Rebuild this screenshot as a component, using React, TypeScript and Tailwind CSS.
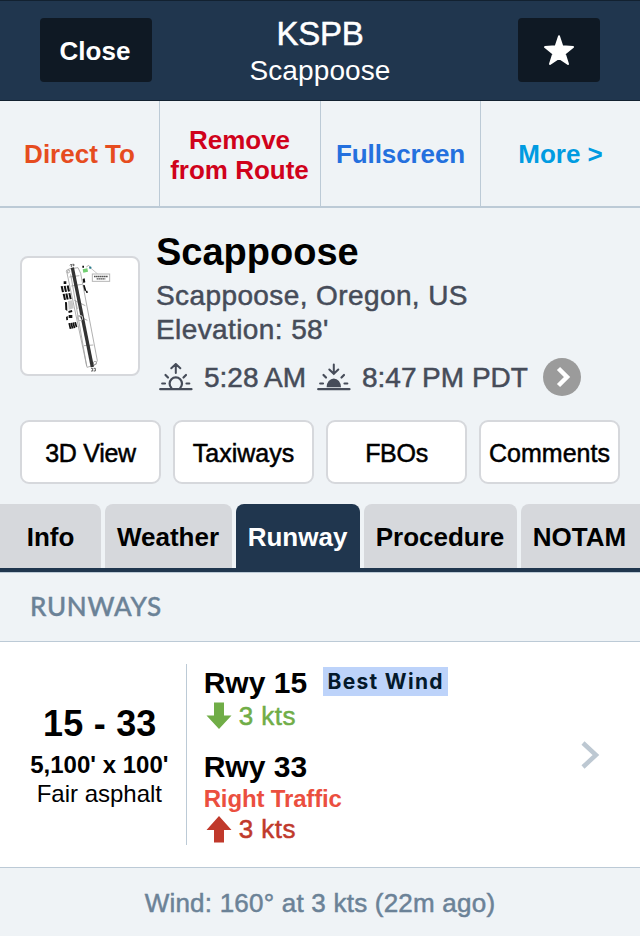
import type { ReactNode } from 'react';

const medium = '[-webkit-text-stroke:0.5px_currentColor]';

function AirportDiagram() {
  const hangars = [
    [152, 124], [161, 123], [170, 122],
    [158, 147], [166, 146], [175, 145],
  ];
  return (
    <svg viewBox="36 39 348 348" className="h-[116px] w-[116px]" fill="none">
      <g stroke="#a0a0a0" strokeWidth="2.5">
        <path d="M171 84 L176 72 L204 68 L212 85 L262 347 L255 360 L231 367 Z" />
        <path d="M182 88 L230 363 M178 96 L208 92 M184 123 L216 118 M193 166 L226 182 M203 212 L232 226 M222 302 L250 300 M202 192 L196 165" />
        <circle cx="174" cy="79" r="5" />
        <circle cx="255" cy="354" r="5" />
      </g>
      <path d="M187 68 L247 366" stroke="#333" strokeWidth="10" />
      <path d="M180 61 l4 -4 v9 m3 -8 h5 v4 h-4 M243 370 h5 v8 h-5 m8 -8 h5 v8 h-5" stroke="#444" strokeWidth="2.5" />
      <g fill="#111">
        {hangars.map(([x, y]) => (
          <path key={`${x}-${y}`} d={`M${x} ${y} l6 -1 l4 18 l-6 1 Z`} />
        ))}
        <path d="M161 109h8v8h-8zM165 171l6 1 1 26-6-4zM175 198l11-3 1 6-11 3zM176 210h11v9h-11zM168 216l5-3 1 12-5 1zM218 102l6-2 2 12-6 2zM219 121l5-1 5 17-5 1zM227 138l5-1 2 6-5 1zM217 62h5v6h-5z" />
        <path d="M175 235l5-1 4 17-5 1zM181 234l5-1 4 17-5 1zM187 233l5-1 4 17-5 1zM193 232l5-1 4 15-5 1z" />
      </g>
      <path d="M174 168 L187 166 L191 190 L176 194 Z" fill="#c9c9c9" />
      <circle cx="210" cy="219" r="8" stroke="#bbb" strokeWidth="3" />
      <path d="M218 73 L232 70 L234 80 L220 83 Z" fill="#72cf72" />
      <path d="M229 66 L236 61 L241 67" stroke="#aaa" strokeWidth="3" />
      <circle cx="241" cy="68" r="3.5" fill="#2a7c8c" />
      <path d="M243 70 L263 87" stroke="#aaa" strokeWidth="2" />
      <rect x="247" y="87" width="52" height="22" fill="#fff" stroke="#b5b5b5" strokeWidth="3" />
      <path d="M252 94.500 H294 M260 101.500 H286" stroke="#555" strokeWidth="4" strokeDasharray="5 1" />
    </svg>
  );
}

function SunIcon({ set = false }: { set?: boolean }) {
  return (
    <svg viewBox="0 0 34 28" className="h-7 w-[34px]" fill="none" stroke="#464c59" strokeWidth="2.200" strokeLinecap="round">
      <path d="M1.200 26.200 H32.500 M3.200 20.500 H6 M27.500 20.500 H30.300 M6.500 12 L9 14.500 M27 12 L24.500 14.500" />
      {set ? (
        <>
          <path d="M9.600 24.300 A7.200 8.800 0 0 1 24 24.300 Z" fill="#464c59" stroke="none" />
          <path d="M16.800 1.500 V10 M12.300 6.500 L16.800 10.800 L21.300 6.500" strokeWidth="2" />
        </>
      ) : (
        <>
          <path d="M12.400 25 A6.200 6.200 0 1 1 21.200 25" />
          <path d="M16.800 10 V1.500 M12.300 5.200 L16.800 1 L21.300 5.200" strokeWidth="2" />
        </>
      )}
    </svg>
  );
}

function WindArrow({ up = false }: { up?: boolean }) {
  return (
    <svg viewBox="0 0 26 27" className="h-[27px] w-[26px]">
      {up ? (
        <path d="M13 0 L25.500 14 H18 V26.500 H8 V14 H0.500 Z" fill="#c0392b" />
      ) : (
        <path d="M13 27 L25.500 13.500 H18 V0.500 H8 V13.500 H0.500 Z" fill="#70ad47" />
      )}
    </svg>
  );
}

function LinkButton({ children }: { children: ReactNode }) {
  return (
    <button className={`h-16 w-[141px] rounded-[9px] border-2 border-[#d6d8dc] bg-white pt-px text-[25px] leading-[30px] whitespace-nowrap text-black ${medium}`}>
      {children}
    </button>
  );
}

const tabs = [
  { name: 'Info', style: 'w-[101px] rounded-tr-lg bg-[#d6d8dc]' },
  { name: 'Weather', style: 'w-[127px] rounded-t-lg bg-[#d6d8dc] pr-px' },
  { name: 'Runway', style: 'w-[124px] rounded-t-lg bg-[#20364e] pr-px text-white' },
  { name: 'Procedure', style: 'w-[153px] rounded-t-lg bg-[#d6d8dc] pr-px' },
  { name: 'NOTAM', style: 'w-[119px] rounded-tl-lg bg-[#d6d8dc] pr-0.5' },
];

export default function App() {
  return (
    <div className="flex h-[936px] w-[640px] flex-col overflow-hidden bg-[#eff3f6] font-['Liberation_Sans',Arial,sans-serif] text-black antialiased">
      <header className="flex h-[101px] shrink-0 items-start justify-between border-y border-[#122130] bg-[#20364e] px-10 pt-[17px] text-white">
        <button className="h-16 w-28 rounded bg-[#0f1924] pt-0.5 pr-0.5 text-[26px] leading-8 font-bold">Close</button>
        <div className="-mt-1 -ml-[30px] w-[200px] text-center">
          <div className={`text-[33px] leading-10 tracking-[-0.200px] ${medium}`}>KSPB</div>
          <div className="pt-px text-[28px] leading-8 tracking-[0.100px]">Scappoose</div>
        </div>
        <button className="flex h-16 w-[82px] items-center justify-center rounded bg-[#0f1924]">
          <svg viewBox="0 0 30 30" className="h-[30px] w-[30px] overflow-visible" fill="#fff" stroke="#fff" strokeWidth="2" strokeLinejoin="round">
            <path d="M15 1.200 L18.300 11.300 L29 12 L20.700 18.600 L24 29 L15 22.900 L6 29 L9.300 18.600 L1 12 L11.700 11.300 Z" />
          </svg>
        </button>
      </header>

      <nav className="flex h-[107px] shrink-0 border-b-2 border-[#bccad6] text-center text-[26px] leading-[30px] font-bold">
        <div className="flex w-40 items-center justify-center border-r border-[#bccad6] text-[#e64c1f]">Direct To</div>
        <div className="flex w-[161px] items-center justify-center border-r border-[#bccad6] pt-0.5 pr-px text-[#d0021b]">Remove<br />from Route</div>
        <div className="flex w-40 items-center justify-center border-r border-[#bccad6] tracking-[-0.100px] text-[#2470de]">Fullscreen</div>
        <div className="flex w-[159px] items-center justify-center text-[#009be1]">More &gt;</div>
      </nav>

      <section className="flex h-[212px] shrink-0 gap-4 px-5">
        <div className="mt-12 h-[120px] w-[120px] shrink-0 rounded-lg border-2 border-[#d6d8dc] bg-white">
          <AirportDiagram />
        </div>
        <div className="pt-[22px] whitespace-nowrap text-[#464c59]">
          <h1 className="text-[38px] leading-[44px] font-bold text-black">Scappoose</h1>
          <div className={`pt-[5px] text-[28px] leading-[34px] ${medium}`}>
            <div className="tracking-[0.400px]">Scappoose, Oregon, US</div>
            <div className="tracking-[0.400px]">Elevation: 58'</div>
          </div>
          <div className={`mt-[10px] ml-[3px] flex h-[39px] items-center text-[28px] leading-[34px] ${medium}`}>
            <SunIcon />
            <span className="ml-[11px] w-[113px] pt-0.5">5:28&#8201;AM</span>
            <SunIcon set />
            <span className="ml-[11px] w-[181px] pt-0.5">8:47&#8201;PM PDT</span>
            <svg viewBox="0 0 38 38" className="h-[38px] w-[38px]">
              <circle cx="19" cy="19" r="19" fill="#9b9b9b" />
              <path d="M15.500 10.500 L24 19 L15.500 27.500" fill="none" stroke="#fff" strokeWidth="4.500" />
            </svg>
          </div>
        </div>
      </section>

      <div className="flex h-[84px] shrink-0 gap-3 px-5">
        <LinkButton><span className="tracking-[-0.300px]">3D View</span></LinkButton>
        <LinkButton>Taxiways</LinkButton>
        <LinkButton><span className="tracking-[-0.300px]">FBOs</span></LinkButton>
        <LinkButton>Comments</LinkButton>
      </div>

      <div className="flex h-[68px] shrink-0 gap-1 border-b-4 border-[#20364e] text-[26px] leading-[30px] font-bold">
        {tabs.map((tab) => (
          <div key={tab.name} className={`flex h-16 shrink-0 items-center justify-center pt-0.5 ${tab.style}`}>{tab.name}</div>
        ))}
      </div>

      <h2 className="h-[70px] shrink-0 border-y border-[#bccad6] pt-[17px] pl-[30px] font-['Lato','Open_Sans',sans-serif] text-[26px] leading-8 font-medium tracking-[0.700px] text-[#6b8297] [-webkit-text-stroke:0.4px_currentColor]">RUNWAYS</h2>

      <section className="flex h-[226px] shrink-0 items-center border-b border-[#bccad6] bg-white pr-10">
        <div className="flex h-[181px] w-[187px] flex-col items-center border-r border-[#bccad6] pt-10 pl-[13px] whitespace-nowrap">
          <div className="pl-px text-[36px] leading-10 font-bold tracking-[0.200px]">15 - 33</div>
          <div className="mt-1.5 text-[24px] leading-[30px] font-bold">5,100' x 100'</div>
          <div className="text-[24px] leading-7">Fair asphalt</div>
        </div>
        <div className="h-[181px] w-[380px] pl-[17px]">
          <div className="flex h-9 items-start">
            <div className="w-[119px] pt-px text-[30px] leading-9 font-bold">Rwy 15</div>
            <div className="mt-[3px] h-[29px] w-[125px] bg-[#bdd3fa] pl-px text-center font-['Inter',sans-serif] text-[21px] leading-[29px] font-bold tracking-[1.300px] whitespace-nowrap text-[#04192b]">Best Wind</div>
          </div>
          <div className={`flex h-[31px] items-center gap-[7px] pl-0.5 text-[26px] leading-[30px] tracking-[0.500px] text-[#70ad47] ${medium}`}><WindArrow />3 kts</div>
          <div className="mt-[18px] text-[30px] leading-9 font-bold">Rwy 33</div>
          <div className="text-[24px] leading-7 font-bold tracking-[-0.150px] text-[#eb4f3f]">Right Traffic</div>
          <div className={`flex h-8 items-center gap-[7px] pl-0.5 text-[26px] leading-[30px] tracking-[0.500px] text-[#c0392b] ${medium}`}><WindArrow up />3 kts</div>
        </div>
        <svg viewBox="0 0 20 28" className="ml-[14px] h-7 w-5" fill="none" stroke="#bdc8d2" strokeWidth="4.500">
          <path d="M3 2 L16 14 L3 26" />
        </svg>
      </section>

      <footer className={`pt-5 text-center text-[26px] leading-[30px] tracking-[0.220px] text-[#6b8297] ${medium}`}>
        Wind: 160° at 3 kts (22m ago)
      </footer>
    </div>
  );
}
